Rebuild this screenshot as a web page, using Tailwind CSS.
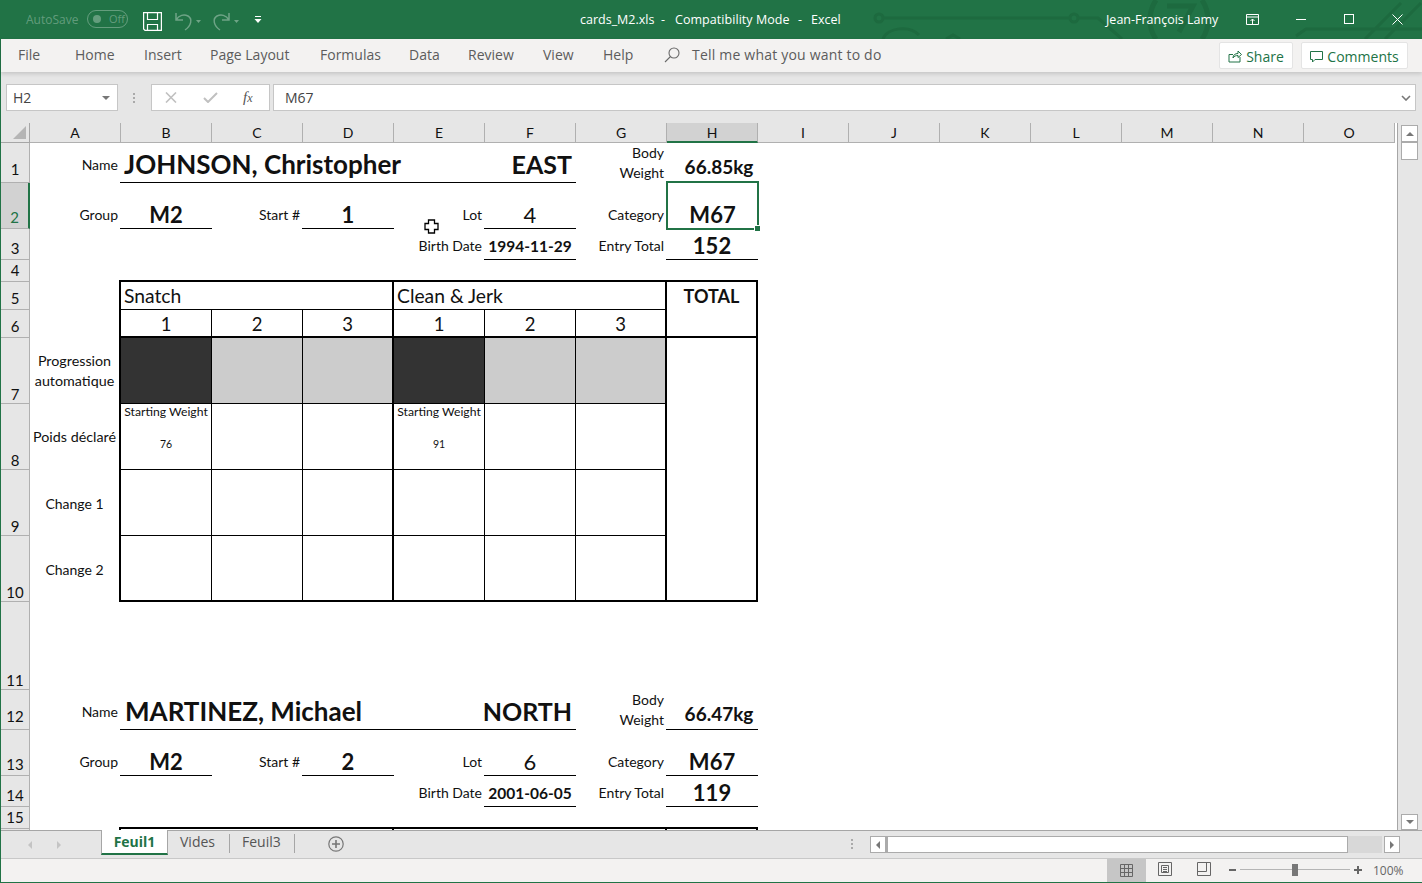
<!DOCTYPE html>
<html lang="en">
<head>
<meta charset="UTF-8">
<title>cards_M2.xls - Excel</title>
<script src="https://cdn.jsdelivr.net/npm/@tailwindcss/browser@4"></script>
</head>
<body class="w-[1422px] h-[883px] overflow-hidden bg-[#e6e6e6] [font-family:'Open_Sans',sans-serif]">

<!-- title bar -->
<div class="relative h-[39px] bg-[#217346] flex items-center text-white overflow-hidden">
  <svg class="absolute left-0 top-0" width="1422" height="39" fill="none" stroke="#1d6a3f" stroke-width="3">
    <circle cx="879" cy="18" r="4"/><circle cx="1074" cy="18" r="4"/>
    <path d="M883 18H1070M1078 18H1098L1122 39"/>
    <path d="M883 39a20 14 0 0 1 36 -4M946 39l7-4 7 4"/>
    <path d="M1156 0c-8 12-8 28 0 39M1202 0c8 12 8 28 0 39M1167 6h26l-14 26" stroke-width="5"/>
    <path d="M1296 36l10-7H1422M1365 39l36-36M1385 39l36-36"/>
  </svg>
  <span class="absolute left-[26px] top-[11px] text-[12px] text-white/30">AutoSave</span>
  <div class="absolute left-[87px] top-[10px] w-[41px] h-[18px] rounded-full border border-white/30 flex items-center pl-[5px]">
    <span class="w-[8px] h-[8px] rounded-full bg-white/30"></span>
    <span class="ml-[8px] text-[11px] text-white/30">Off</span>
  </div>
  <svg class="absolute left-[143px] top-[12px]" width="19" height="19" fill="none" stroke="#fff" stroke-width="1.2">
    <path d="M.6.6H18.4V18.4H2L.6 17Z"/><path d="M4.5.6V7.5H14.5V.6M4.5 18.4V12.5H14.5V18.4"/>
  </svg>
  <svg class="absolute left-[174px] top-[11px]" width="30" height="20" fill="none" stroke="#fff" stroke-opacity=".35" stroke-width="1.5">
    <path d="M2 2V9H9M2 9C5 4 10 3 14 5C19 8 17 15 11 19"/>
    <path d="M22 9h5l-2.5 3z" fill="#fff" fill-opacity=".35" stroke="none"/>
  </svg>
  <svg class="absolute left-[212px] top-[11px]" width="30" height="20" fill="none" stroke="#fff" stroke-opacity=".35" stroke-width="1.5">
    <path d="M17 2V9H10M17 9C14 4 9 3 5 5C0 8 2 15 8 19"/>
    <path d="M22 9h5l-2.5 3z" fill="#fff" fill-opacity=".35" stroke="none"/>
  </svg>
  <svg class="absolute left-[254px] top-[15px]" width="8" height="9" fill="#fff">
    <rect x="1" y="1" width="6" height="1"/><path d="M.5 4h7L4 8z"/>
  </svg>
  <span class="absolute left-[580px] top-[11px] text-[12.5px] leading-[17px]">cards_M2.xls</span>
  <span class="absolute left-[661px] top-[11px] text-[12.5px] leading-[17px]">-</span>
  <span class="absolute left-[675px] top-[11px] text-[12.5px] leading-[17px] tracking-[0.05px]">Compatibility Mode</span>
  <span class="absolute left-[798px] top-[11px] text-[12.5px] leading-[17px]">-</span>
  <span class="absolute left-[811px] top-[11px] text-[12.5px] leading-[17px]">Excel</span>
  <span class="absolute left-[1106px] top-[11px] text-[12.5px] leading-[17px]">Jean-François Lamy</span>
  <svg class="absolute left-[1246px] top-[14px]" width="13" height="11" fill="none" stroke="#fff">
    <path d="M.5.5H12.5V10.5H.5ZM.5 3H12.5M6.5 10V5M4.5 7L6.5 5 8.5 7"/>
  </svg>
  <span class="absolute left-[1296px] top-[19px] w-[10px] h-px bg-white"></span>
  <span class="absolute left-[1344px] top-[14px] w-[10px] h-[10px] border border-white"></span>
  <svg class="absolute left-[1392px] top-[14px]" width="11" height="11" stroke="#fff"><path d="M.5.5L10.5 10.5M10.5.5L.5 10.5"/></svg>
</div>

<div class="h-[844px] flex flex-col border-l border-b border-[#217346]">

  <!-- ribbon tabs -->
  <div class="relative z-10 h-[33px] shrink-0 bg-[#f3f2f1] shadow-[0_2px_4px_rgba(0,0,0,0.14)] flex items-center pl-[17px] pb-[2px] text-[14px] text-[#5c5c5c]">
    <span class="w-[57px]">File</span>
    <span class="w-[69px]">Home</span>
    <span class="w-[66px]">Insert</span>
    <span class="w-[110px]">Page Layout</span>
    <span class="w-[89px]">Formulas</span>
    <span class="w-[59px]">Data</span>
    <span class="w-[75px]">Review</span>
    <span class="w-[60px]">View</span>
    <span class="w-[61px]">Help</span>
    <svg class="mr-[12px]" width="16" height="16" fill="none" stroke="#6a6a6a" stroke-width="1.1"><circle cx="10" cy="6" r="5"/><path d="M6.5 9.5L1 15"/></svg>
    <span class="tracking-[0.2px]">Tell me what you want to do</span>
    <div class="absolute left-[1218px] top-[3px] w-[74px] h-[27px] bg-white border border-[#e4e4e4] rounded-[2px] flex items-center justify-center gap-[4px] pt-[1px] text-[#217346] text-[14px]">
      <svg width="14" height="14" fill="none" stroke="#217346"><path d="M1 5.500V13H12V8M1 5.500H5M5 9C5 6 7 4.500 10 4.500V2L13.500 5.500 10 8.500V6.500C8 6.500 6 7 5 9Z"/></svg>Share
    </div>
    <div class="absolute left-[1300px] top-[3px] w-[107px] h-[27px] bg-white border border-[#e4e4e4] rounded-[2px] flex items-center justify-center gap-[4px] pt-[1px] text-[#217346] text-[14px]">
      <svg width="13" height="13" fill="none" stroke="#217346"><path d="M.5 1.500H12.500V9.500H5L2.500 12V9.500H.5Z"/></svg>Comments
    </div>
  </div>

  <!-- formula bar -->
  <div class="h-[51px] shrink-0 flex items-start pt-[12px] pl-[5px] text-[#444] text-[14px]">
    <div class="w-[112px] h-[27px] bg-white border border-[#c6c6c6] flex items-center justify-between pl-[6px] pr-[7px]">
      H2<span class="w-0 h-0 border-x-[4px] border-x-transparent border-t-[4px] border-t-[#777]"></span>
    </div>
    <div class="w-[33px] pr-[1px] flex flex-col items-center justify-center gap-[2px] h-[27px]">
      <span class="w-[2px] h-[2px] bg-[#aaa]"></span><span class="w-[2px] h-[2px] bg-[#aaa]"></span><span class="w-[2px] h-[2px] bg-[#aaa]"></span>
    </div>
    <div class="w-[119px] h-[27px] bg-white border border-[#c6c6c6] flex items-center pl-[13px]">
      <svg width="12" height="11" stroke="#c0c0c0" stroke-width="1.6"><path d="M1 .500L11 10.500M11 .500L1 10.500"/></svg>
      <svg class="ml-[26px]" width="15" height="11" fill="none" stroke="#c0c0c0" stroke-width="2"><path d="M1 6L5 10 14 1"/></svg>
      <span class="ml-[25px] [font-family:'Liberation_Serif',serif] italic text-[15px] text-[#555]">f<span class="text-[12px]">x</span></span>
    </div>
    <div class="ml-[3px] w-[1143px] h-[27px] bg-white border border-[#c6c6c6] flex items-center justify-between pl-[11px] pr-[4px]">
      M67
      <svg width="10" height="6" fill="none" stroke="#777" stroke-width="1.600"><path d="M1 1L5 5 9 1"/></svg>
    </div>
  </div>

  <!-- sheet + vertical scrollbar -->
  <div class="h-[707px] shrink-0 flex">
    <div class="w-[1397px] h-[707px] overflow-hidden border-r border-[#a6a6a6]">
      <div class="grid grid-cols-[29px_repeat(15,91px)] grid-rows-[20px_40px_46px_31px_22px_28px_28px_66px_66px_66px_66px_88px_40px_46px_31px_22px_20px] [font-family:Lato,sans-serif] text-[14px] text-[#111] bg-white w-[1396px]">

        <!-- column headers -->
        <div class="bg-[#e6e6e6] border-r border-b border-[#a6a6a6] relative"><span class="absolute right-[3px] bottom-[3px] w-0 h-0 border-l-[13px] border-l-transparent border-b-[13px] border-b-[#b5b5b5]"></span></div>
        <div class="bg-[#e6e6e6] border-r border-b border-[#b0b0b0] flex items-center justify-center text-[14px]">A</div>
        <div class="bg-[#e6e6e6] border-r border-b border-[#b0b0b0] flex items-center justify-center text-[14px]">B</div>
        <div class="bg-[#e6e6e6] border-r border-b border-[#b0b0b0] flex items-center justify-center text-[14px]">C</div>
        <div class="bg-[#e6e6e6] border-r border-b border-[#b0b0b0] flex items-center justify-center text-[14px]">D</div>
        <div class="bg-[#e6e6e6] border-r border-b border-[#b0b0b0] flex items-center justify-center text-[14px]">E</div>
        <div class="bg-[#e6e6e6] border-r border-b border-[#b0b0b0] flex items-center justify-center text-[14px]">F</div>
        <div class="bg-[#e6e6e6] border-r border-b border-[#b0b0b0] flex items-center justify-center text-[14px]">G</div>
        <div class="bg-[#d2d2d2] border-r border-b-2 border-r-[#b0b0b0] border-b-[#217346] flex items-center justify-center text-[14px]">H</div>
        <div class="bg-[#e6e6e6] border-r border-b border-[#b0b0b0] flex items-center justify-center text-[14px]">I</div>
        <div class="bg-[#e6e6e6] border-r border-b border-[#b0b0b0] flex items-center justify-center text-[14px]">J</div>
        <div class="bg-[#e6e6e6] border-r border-b border-[#b0b0b0] flex items-center justify-center text-[14px]">K</div>
        <div class="bg-[#e6e6e6] border-r border-b border-[#b0b0b0] flex items-center justify-center text-[14px]">L</div>
        <div class="bg-[#e6e6e6] border-r border-b border-[#b0b0b0] flex items-center justify-center text-[14px]">M</div>
        <div class="bg-[#e6e6e6] border-r border-b border-[#b0b0b0] flex items-center justify-center text-[14px]">N</div>
        <div class="bg-[#e6e6e6] border-r border-b border-[#b0b0b0] flex items-center justify-center text-[14px]">O</div>

        <!-- row 1 -->
        <div class="col-start-1 bg-[#e6e6e6] border-r border-b border-[#b0b0b0] flex items-end justify-center text-[15px] leading-[20px] pb-[3px]">1</div>
        <div class="flex items-center justify-end pr-[3px] pt-[2px]">Name</div>
        <div class="col-span-5 -ml-px border-b border-black flex items-center justify-between pl-[4px] pr-[4px] pt-[3px] text-[26px] font-bold leading-none">
          <span>JOHNSON, Christopher</span><span class="text-[25px]">EAST</span>
        </div>
        <div class="flex flex-col items-end justify-center pr-[3px] leading-[20px] -mt-[1px]"><span>Body</span><span>Weight</span></div>
        <div class="flex items-center justify-center pt-[9px] pl-[13px] text-[19px] font-bold">66.85kg</div>

        <!-- row 2 -->
        <div class="col-start-1 bg-[#d2d2d2] border-r-2 border-b border-r-[#217346] border-b-[#b0b0b0] text-[#217346] flex items-end justify-center text-[15px] leading-[20px] pb-[1px]">2</div>
        <div class="flex items-center justify-end pr-[3px] pt-[16px]">Group</div>
        <div class="-ml-px border-b border-black flex items-center justify-center pt-[17px] text-[22px] font-bold">M2</div>
        <div class="flex items-center justify-end pr-[3px] pt-[16px]">Start #</div>
        <div class="-ml-px border-b border-black flex items-center justify-center pt-[17px] text-[22px] font-bold">1</div>
        <div class="flex items-center justify-end pr-[3px] pt-[16px]">Lot</div>
        <div class="-ml-px border-b border-black flex items-center justify-center pt-[17px] text-[22px]">4</div>
        <div class="flex items-center justify-end pr-[3px] pt-[16px]">Category</div>
        <div class="relative flex items-center justify-center pt-[17px] text-[22px] font-bold">M67
          <span class="absolute left-[-1px] top-[-2px] w-[93px] h-[49px] border-2 border-[#217346]"></span>
          <span class="absolute left-[88px] top-[43px] w-[5px] h-[5px] bg-[#217346] outline outline-white"></span>
        </div>

        <!-- row 3 -->
        <div class="col-start-1 bg-[#e6e6e6] border-r border-b border-[#b0b0b0] flex items-end justify-center text-[15px] leading-[20px] pb-[1px]">3</div>
        <div class="col-start-6 flex items-center justify-end pr-[3px] pt-[2px]">Birth Date</div>
        <div class="-ml-px border-b border-black flex items-center justify-center pt-[6px] text-[15.5px] font-bold">1994-11-29</div>
        <div class="flex items-center justify-end pr-[3px] pt-[2px]">Entry Total</div>
        <div class="-ml-px border-b border-black flex items-center justify-center pt-[2px] text-[22px] font-bold">152</div>

        <!-- row 4 -->
        <div class="col-start-1 bg-[#e6e6e6] border-r border-b border-[#b0b0b0] flex items-end justify-center text-[15px] leading-[20px] pb-[1px]">4</div>
        <div class="col-start-3 col-span-7 -ml-[2px] border-b-2 border-black"></div>

        <!-- row 5 -->
        <div class="col-start-1 bg-[#e6e6e6] border-r border-b border-[#b0b0b0] flex items-end justify-center text-[15px] leading-[20px] pb-[1px]">5</div>
        <div class="border-r-2 border-black"></div>
        <div class="col-span-3 border-r-2 border-b border-black flex items-center pl-[3px] text-[19.3px] leading-none">Snatch</div>
        <div class="col-span-3 border-r-2 border-b border-black flex items-center pl-[3px] text-[19.3px] leading-none">Clean &amp; Jerk</div>
        <div class="row-span-2 border-r-2 border-b-2 border-black flex justify-center pt-[4px] text-[18px] font-bold leading-[20px]">TOTAL</div>

        <!-- row 6 -->
        <div class="col-start-1 bg-[#e6e6e6] border-r border-b border-[#b0b0b0] flex items-end justify-center text-[15px] leading-[20px] pb-[1px]">6</div>
        <div class="border-r-2 border-black"></div>
        <div class="border-r border-b-2 border-black flex items-center justify-center pt-[4px] text-[18.5px]">1</div>
        <div class="border-r border-b-2 border-black flex items-center justify-center pt-[4px] text-[18.5px]">2</div>
        <div class="border-r-2 border-b-2 border-black flex items-center justify-center pt-[4px] text-[18.5px]">3</div>
        <div class="border-r border-b-2 border-black flex items-center justify-center pt-[4px] text-[18.5px]">1</div>
        <div class="border-r border-b-2 border-black flex items-center justify-center pt-[4px] text-[18.5px]">2</div>
        <div class="border-r-2 border-b-2 border-black flex items-center justify-center pt-[4px] text-[18.5px]">3</div>

        <!-- row 7 -->
        <div class="col-start-1 bg-[#e6e6e6] border-r border-b border-[#b0b0b0] flex items-end justify-center text-[15px] leading-[18px]">7</div>
        <div class="border-r-2 border-black flex flex-col items-center justify-center text-[14.3px] leading-[20px] -mt-[1px]"><span>Progression</span><span>automatique</span></div>
        <div class="bg-[#333] border-r border-b border-black"></div>
        <div class="bg-[#ccc] border-r border-b border-black"></div>
        <div class="bg-[#ccc] border-r-2 border-b border-black"></div>
        <div class="bg-[#333] border-r border-b border-black"></div>
        <div class="bg-[#ccc] border-r border-b border-black"></div>
        <div class="bg-[#ccc] border-r-2 border-b border-black"></div>
        <div class="row-span-4 border-r-2 border-b-2 border-black"></div>

        <!-- row 8 -->
        <div class="col-start-1 bg-[#e6e6e6] border-r border-b border-[#b0b0b0] flex items-end justify-center text-[15px] leading-[18px]">8</div>
        <div class="border-r-2 border-black flex items-center justify-center text-[14.3px]">Poids déclaré</div>
        <div class="border-r border-b border-black flex flex-col items-center text-[12.2px] leading-[16px]"><span>Starting Weight</span><span>&nbsp;</span><span class="text-[10.5px]">76</span></div>
        <div class="border-r border-b border-black"></div>
        <div class="border-r-2 border-b border-black"></div>
        <div class="border-r border-b border-black flex flex-col items-center text-[12.2px] leading-[16px]"><span>Starting Weight</span><span>&nbsp;</span><span class="text-[10.5px]">91</span></div>
        <div class="border-r border-b border-black"></div>
        <div class="border-r-2 border-b border-black"></div>

        <!-- row 9 -->
        <div class="col-start-1 bg-[#e6e6e6] border-r border-b border-[#b0b0b0] flex items-end justify-center text-[15px] leading-[18px]">9</div>
        <div class="border-r-2 border-black flex items-center justify-center">Change 1</div>
        <div class="border-r border-b border-black"></div>
        <div class="border-r border-b border-black"></div>
        <div class="border-r-2 border-b border-black"></div>
        <div class="border-r border-b border-black"></div>
        <div class="border-r border-b border-black"></div>
        <div class="border-r-2 border-b border-black"></div>

        <!-- row 10 -->
        <div class="col-start-1 bg-[#e6e6e6] border-r border-b border-[#b0b0b0] flex items-end justify-center text-[15px] leading-[18px]">10</div>
        <div class="border-r-2 border-black flex items-center justify-center">Change 2</div>
        <div class="border-r border-b-2 border-black"></div>
        <div class="border-r border-b-2 border-black"></div>
        <div class="border-r-2 border-b-2 border-black"></div>
        <div class="border-r border-b-2 border-black"></div>
        <div class="border-r border-b-2 border-black"></div>
        <div class="border-r-2 border-b-2 border-black"></div>

        <!-- row 11 -->
        <div class="col-start-1 bg-[#e6e6e6] border-r border-b border-[#b0b0b0] flex items-end justify-center text-[15px] leading-[18px]">11</div>

        <!-- row 12 -->
        <div class="col-start-1 bg-[#e6e6e6] border-r border-b border-[#b0b0b0] flex items-end justify-center text-[15px] leading-[20px] pb-[3px]">12</div>
        <div class="flex items-center justify-end pr-[3px] pt-[2px]">Name</div>
        <div class="col-span-5 -ml-px border-b border-black flex items-center justify-between pl-[5px] pr-[4px] pt-[3px] text-[26px] font-bold leading-none">
          <span>MARTINEZ, Michael</span><span class="text-[25px]">NORTH</span>
        </div>
        <div class="flex flex-col items-end justify-center pr-[3px] leading-[20px] -mt-[1px]"><span>Body</span><span>Weight</span></div>
        <div class="-ml-px border-b border-black flex items-center justify-center pt-[9px] pl-[14px] text-[19px] font-bold">66.47kg</div>

        <!-- row 13 -->
        <div class="col-start-1 bg-[#e6e6e6] border-r border-b border-[#b0b0b0] flex items-end justify-center text-[15px] leading-[20px] pb-[1px]">13</div>
        <div class="flex items-center justify-end pr-[3px] pt-[16px]">Group</div>
        <div class="-ml-px border-b border-black flex items-center justify-center pt-[17px] text-[22px] font-bold">M2</div>
        <div class="flex items-center justify-end pr-[3px] pt-[16px]">Start #</div>
        <div class="-ml-px border-b border-black flex items-center justify-center pt-[17px] text-[22px] font-bold">2</div>
        <div class="flex items-center justify-end pr-[3px] pt-[16px]">Lot</div>
        <div class="-ml-px border-b border-black flex items-center justify-center pt-[17px] text-[22px]">6</div>
        <div class="flex items-center justify-end pr-[3px] pt-[16px]">Category</div>
        <div class="-ml-px border-b border-black flex items-center justify-center pt-[17px] text-[22px] font-bold">M67</div>

        <!-- row 14 -->
        <div class="col-start-1 bg-[#e6e6e6] border-r border-b border-[#b0b0b0] flex items-end justify-center text-[15px] leading-[20px] pb-[1px]">14</div>
        <div class="col-start-6 flex items-center justify-end pr-[3px] pt-[2px]">Birth Date</div>
        <div class="-ml-px border-b border-black flex items-center justify-center pt-[6px] text-[15.5px] font-bold">2001-06-05</div>
        <div class="flex items-center justify-end pr-[3px] pt-[2px]">Entry Total</div>
        <div class="-ml-px border-b border-black flex items-center justify-center pt-[2px] text-[22px] font-bold">119</div>

        <!-- row 15 -->
        <div class="col-start-1 bg-[#e6e6e6] border-r border-b border-[#b0b0b0] flex items-end justify-center text-[15px] leading-[20px] pb-[1px]">15</div>
        <div class="col-start-3 col-span-7 -ml-[2px] border-b-2 border-black"></div>

        <!-- row 16, one pixel of it shows -->
        <div class="col-start-1 bg-[#e6e6e6] border-r border-[#b0b0b0]"></div>
        <div class="border-r-2 border-black"></div>
        <div class="col-start-5 border-r-2 border-black"></div>
        <div class="col-start-8 border-r-2 border-black"></div>
        <div class="border-r-2 border-black"></div>
      </div>
    </div>
    <!-- vertical scrollbar -->
    <div class="w-[24px] flex flex-col items-start pl-[3px] pt-[2px] relative">
      <div class="w-[17px] h-[17px] bg-white border border-[#ababab] flex items-center justify-center"><span class="w-0 h-0 border-x-[4px] border-x-transparent border-b-[4px] border-b-[#777]"></span></div>
      <div class="w-[17px] h-[18px] bg-white border border-[#ababab]"></div>
      <div class="absolute left-[3px] bottom-[0px] w-[17px] h-[16px] bg-white border border-[#ababab] flex items-center justify-center"><span class="w-0 h-0 border-x-[4px] border-x-transparent border-t-[4px] border-t-[#777]"></span></div>
    </div>
  </div>

  <!-- sheet tabs -->
  <div class="h-[28px] shrink-0 border-t border-[#a6a6a6] relative flex text-[14px] text-[#555]">
    <span class="absolute left-[27px] top-[10px] w-0 h-0 border-y-[4px] border-y-transparent border-r-[4px] border-r-[#c4c4c4]"></span>
    <span class="absolute left-[56px] top-[10px] w-0 h-0 border-y-[4px] border-y-transparent border-l-[4px] border-l-[#c4c4c4]"></span>
    <div class="absolute left-[100px] -top-px w-[67px] h-[25px] bg-white border-x border-[#a6a6a6] border-b-2 border-b-[#217346] text-[#217346] font-bold flex items-center justify-center">Feuil1</div>
    <span class="absolute left-[179px] top-0">Vides</span>
    <span class="absolute left-[228px] top-[3px] w-px h-[19px] bg-[#a6a6a6]"></span>
    <span class="absolute left-[241px] top-0">Feuil3</span>
    <span class="absolute left-[293px] top-[3px] w-px h-[19px] bg-[#a6a6a6]"></span>
    <svg class="absolute left-[327px] top-[5px]" width="16" height="16" fill="none" stroke="#777" stroke-width="1.200"><circle cx="8" cy="8" r="7.200"/><path d="M8 4V12M4 8H12" stroke-width="1.600"/></svg>
    <div class="absolute left-[850px] top-[8px] flex flex-col gap-[2px]">
      <span class="w-[2px] h-[2px] bg-[#aaa]"></span><span class="w-[2px] h-[2px] bg-[#aaa]"></span><span class="w-[2px] h-[2px] bg-[#aaa]"></span>
    </div>
    <div class="absolute left-[869px] top-[5px] flex h-[17px] w-[530px]">
      <div class="w-[16px] h-[17px] bg-white border border-[#ababab] flex items-center justify-center"><span class="w-0 h-0 border-y-[4px] border-y-transparent border-r-[4px] border-r-[#777]"></span></div>
      <div class="w-[462px] h-[17px] bg-white border border-[#ababab] border-l-2"></div>
      <div class="w-[34px] h-[17px] bg-[#d8d8d8]"></div>
      <div class="ml-[2px] w-[16px] h-[17px] bg-white border border-[#ababab] flex items-center justify-center"><span class="w-0 h-0 border-y-[4px] border-y-transparent border-l-[4px] border-l-[#777]"></span></div>
    </div>
  </div>

  <!-- status bar -->
  <div class="flex-1 border-t border-[#c8c8c8] bg-[#f3f2f1] relative text-[12px] text-[#666]">
    <div class="absolute left-[1106px] top-0 bottom-0 w-[39px] bg-[#c6c6c6] flex items-center justify-center">
      <svg width="13" height="13" fill="none" stroke="#666"><path d="M.5.500H12.500V12.500H.5ZM4.500.500V12.500M8.500.500V12.500M.5 4.500H12.500M.5 8.500H12.500"/></svg>
    </div>
    <svg class="absolute left-[1157px] top-[3px]" width="14" height="14" fill="none" stroke="#666"><path d="M.5.500H13.500V13.500H.5ZM3.500 3.500H10.500V10.500H3.500ZM5 5.500H9M5 7.500H9M5 9.500H9"/></svg>
    <svg class="absolute left-[1196px] top-[3px]" width="14" height="14" fill="none" stroke="#666"><path d="M.5.500H13.500V13.500H.5ZM.5 9.500H9.500V.5"/></svg>
    <span class="absolute left-[1228px] top-[10px] w-[7px] h-[2px] bg-[#666]"></span>
    <span class="absolute left-[1239px] top-[10px] w-[110px] h-px bg-[#b5b5b5]"></span>
    <span class="absolute left-[1291px] top-[5px] w-[6px] h-[12px] bg-[#777]"></span>
    <svg class="absolute left-[1353px] top-[7px]" width="8" height="8" stroke="#666" stroke-width="2"><path d="M4 0V8M0 4H8"/></svg>
    <span class="absolute left-[1372px] top-[3px]">100%</span>
  </div>
</div>

<!-- cell cursor -->
<svg class="absolute left-[424px] top-[219px]" width="15" height="15" fill="#fff" stroke="#000" stroke-width="1.300"><path d="M4.500 1H10.500V4.500H14V10.500H10.500V14H4.500V10.500H1V4.500H4.500Z"/></svg>

</body>
</html>
